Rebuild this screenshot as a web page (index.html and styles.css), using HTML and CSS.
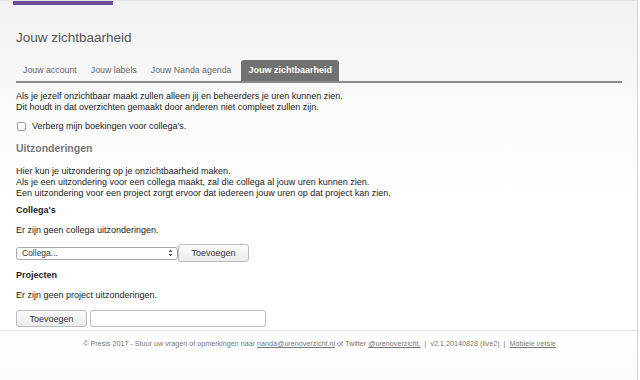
FILE: index.html
```html
<!DOCTYPE html>
<html lang="nl">
<head>
<meta charset="utf-8">
<title>Jouw zichtbaarheid</title>
<link rel="stylesheet" href="styles.css">
</head>
<body>
<div class="page">
  <div class="brand-bar"></div>
  <main class="content">
    <h1 class="title">Jouw zichtbaarheid</h1>
    <nav class="tabs">
      <a class="tab">Jouw account</a>
      <a class="tab">Jouw labels</a>
      <a class="tab">Jouw Nanda agenda</a>
      <a class="tab active">Jouw zichtbaarheid</a>
    </nav>
    <p class="intro">Als je jezelf onzichtbaar maakt zullen alleen jij en beheerders je uren kunnen zien.<br>Dit houdt in dat overzichten gemaakt door anderen niet compleet zullen zijn.</p>
    <label class="check-row"><span class="checkbox"></span>Verberg mijn boekingen voor collega's.</label>
    <h2 class="section-title">Uitzonderingen</h2>
    <p class="explain">Hier kun je uitzondering op je onzichtbaarheid maken.<br>Als je een uitzondering voor een collega maakt, zal die collega al jouw uren kunnen zien.<br>Een uitzondering voor een project zorgt ervoor dat iedereen jouw uren op dat project kan zien.</p>
    <h3 class="sub-title">Collega's</h3>
    <p class="empty">Er zijn geen collega uitzonderingen.</p>
    <div class="form-row">
      <div class="select"><span>Collega...</span>
        <svg class="arrows" width="5" height="8" viewBox="0 0 5 8"><path d="M0.5 3 L2.5 0.6 L4.5 3 Z M0.5 5 L2.5 7.4 L4.5 5 Z" fill="#555"/></svg>
      </div>
      <button class="btn btn-collega">Toevoegen</button>
    </div>
    <h3 class="sub-title projects">Projecten</h3>
    <p class="empty">Er zijn geen project uitzonderingen.</p>
    <div class="form-row row2">
      <button class="btn btn-project">Toevoegen</button>
      <div class="text-input"></div>
    </div>
  </main>
  <footer class="footer">© Presis 2017 - Stuur uw vragen of opmerkingen naar <a>nanda@urenoverzicht.nl</a> of Twitter <a>@urenoverzicht.</a> &nbsp;| &nbsp;v2.1.20140828 (live2) &nbsp;| &nbsp;<a>Mobiele versie</a></footer>
</div>
</body>
</html>
```
FILE: styles.css
```css
html, body {
  margin: 0;
  padding: 0;
}
body {
  font-family: "Liberation Sans", Arial, sans-serif;
  color: #222;
  background: #fff;
}
.page {
  width: 638px;
  height: 380px;
  border-right: 1px solid #d6d6d6;
  border-top: 1px solid #e4e4e4;
  box-sizing: border-box;
  background: linear-gradient(#f1f1f1 0px, #fafafa 110px, #ffffff 200px, #ffffff 330px, #fbfbfb 380px);
  overflow: hidden;
}
.brand-bar {
  width: 100px;
  height: 4px;
  margin-left: 13px;
  background: #6d4c9c;
}
.content {
  padding-left: 16px;
  padding-right: 15px;
}
.title {
  margin: 25px 0 0;
  font-size: 13.5px;
  line-height: 16px;
  font-weight: normal;
  color: #555;
}
.tabs {
  margin-top: 14px;
  display: flex;
  border-bottom: 2px solid #8a8a8a;
}
.tab {
  padding: 0 7px;
  height: 21px;
  line-height: 21px;
  font-size: 8.8px;
  color: #666;
}
.tab.active {
  margin-left: 3px;
  background: #717171;
  color: #fff;
  font-size: 9px;
  font-weight: bold;
  border-radius: 3px 3px 0 0;
}
p {
  margin: 0;
  font-size: 9px;
  line-height: 11px;
}
.intro {
  margin-top: 8px;
}
.check-row {
  margin-top: 8px;
  display: flex;
  align-items: center;
  font-size: 9px;
  line-height: 11px;
}
.checkbox {
  width: 7px;
  height: 7px;
  margin-left: 1px;
  margin-right: 6px;
  border: 1px solid #a0a0a0;
  border-radius: 2px;
  background: #fff;
}
.section-title {
  margin: 10px 0 0;
  font-size: 10.5px;
  line-height: 13px;
  color: #777;
}
.explain {
  margin-top: 11px;
}
.sub-title {
  margin: 6px 0 0;
  font-size: 9px;
  line-height: 11px;
  font-weight: bold;
  color: #222;
}
.sub-title.projects {
  margin-top: 8px;
}
.empty {
  margin-top: 9px;
}
.form-row {
  margin-top: 8px;
  display: flex;
  align-items: center;
  height: 18px;
}
.row2 {
  margin-top: 9px;
  height: 17px;
  gap: 3px;
}
.select {
  box-sizing: border-box;
  width: 162px;
  height: 13px;
  border: 1px solid #a8a8a8;
  border-radius: 3px;
  background: #fff;
  display: flex;
  align-items: center;
  justify-content: space-between;
  padding: 0 4px 0 5px;
  font-size: 8.5px;
  color: #333;
}
.btn {
  box-sizing: border-box;
  width: 71px;
  margin: 0;
  padding: 0;
  border: 1px solid #bcbcbc;
  border-radius: 3px;
  background: linear-gradient(#fbfbfb, #ebebeb);
  font-family: "Liberation Sans", Arial, sans-serif;
  font-size: 9px;
  color: #333;
}
.btn-collega {
  height: 18px;
}
.btn-project {
  height: 17px;
}
.text-input {
  box-sizing: border-box;
  width: 176px;
  height: 17px;
  border: 1px solid #bcbcbc;
  border-radius: 3px;
  background: #fff;
}
.footer {
  margin-top: 3px;
  border-top: 1px solid #e2e2e2;
  padding-top: 8px;
  text-align: center;
  font-size: 7.2px;
  line-height: 9px;
  color: #777;
  padding-left: 2px;
}
.footer a {
  text-decoration: underline;
  color: #777;
}
```
